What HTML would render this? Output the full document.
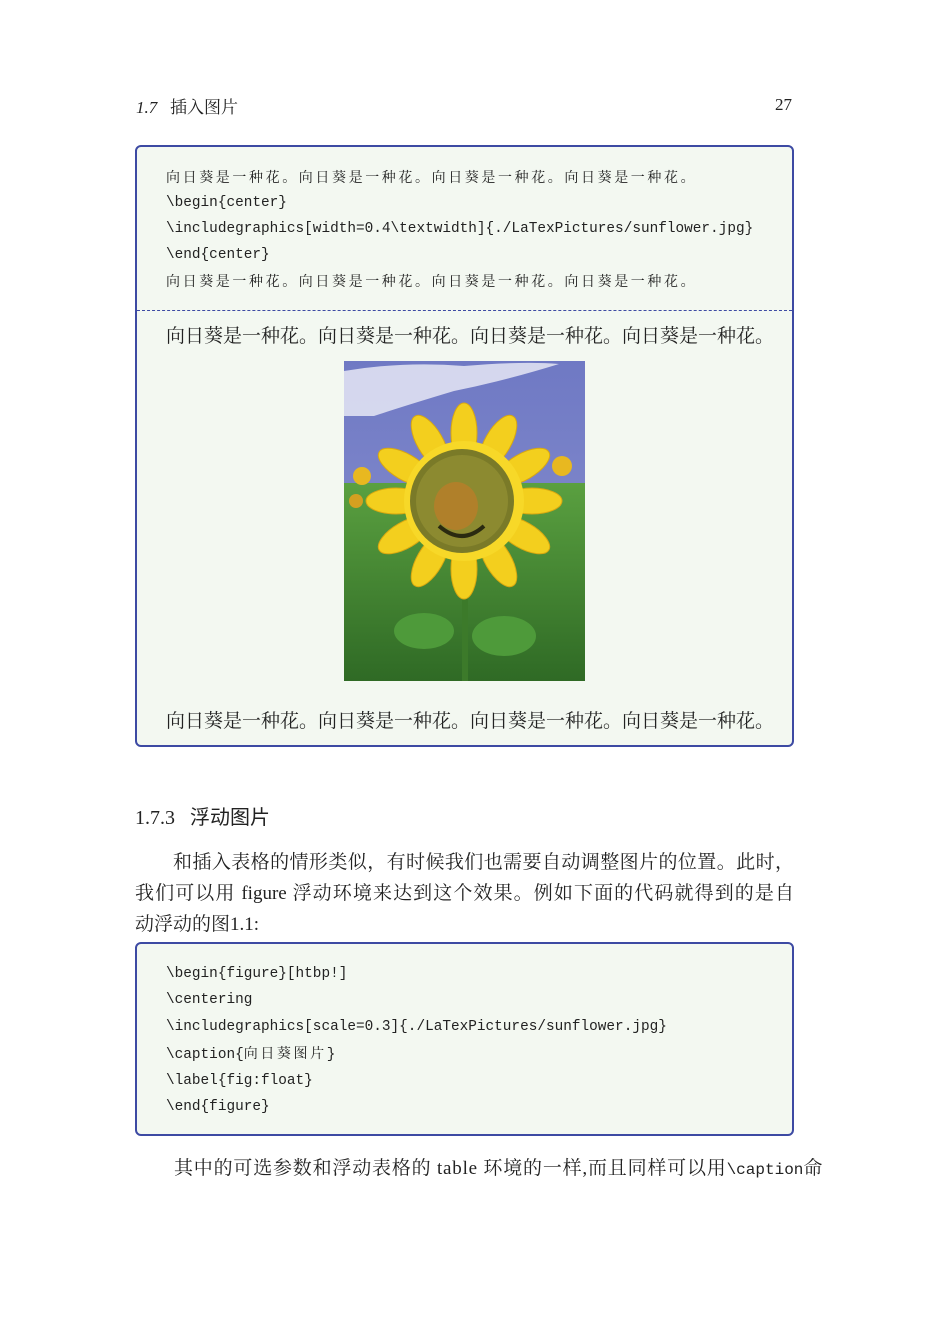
<!DOCTYPE html>
<html><head><meta charset="utf-8"><style>
body{margin:0;background:#fff;width:929px;height:1319px;position:relative;overflow:hidden;font-family:"Liberation Serif","Noto Serif CJK SC",serif;color:#222}
.a{position:absolute;white-space:nowrap}
.box{position:absolute;left:135px;width:655px;border:2px solid #3d4aa3;border-radius:6px;background:#f3f8f1}
.code{font-family:"Liberation Mono","Noto Sans CJK SC",monospace;font-size:14.4px;color:#222}
.cj{font-family:"Noto Serif CJK SC",serif;font-size:14px;letter-spacing:2.6px}
.b{font-size:19px;font-family:"Liberation Serif","Noto Serif CJK SC",serif}
</style></head><body>
<div class="a" style="left:136px;top:93px;font-size:17px;font-style:italic">1.7&nbsp;&nbsp;&nbsp;<span style="font-style:normal;font-family:'Noto Serif CJK SC',serif">插入图片</span></div>
<div class="a" style="left:775px;top:95px;font-size:17px">27</div>

<div class="box" style="top:145px;height:598px"></div>
<div class="a" style="left:137px;top:310px;width:655px;border-top:1.5px dashed #3d4aa3"></div>
<div class="a code" style="left:166px;top:164px;line-height:26px">
<div class="cj">向日葵是一种花。向日葵是一种花。向日葵是一种花。向日葵是一种花。</div>
<div>\begin{center}</div>
<div>\includegraphics[width=0.4\textwidth]{./LaTexPictures/sunflower.jpg}</div>
<div>\end{center}</div>
<div class="cj">向日葵是一种花。向日葵是一种花。向日葵是一种花。向日葵是一种花。</div>
</div>
<div class="a b" style="left:166px;top:321px">向日葵是一种花。向日葵是一种花。向日葵是一种花。向日葵是一种花。</div>
<svg class="a" style="left:344px;top:361px" width="241" height="320" viewBox="0 0 241 320">
<defs><linearGradient id="sky" x1="0" y1="0" x2="0" y2="1"><stop offset="0" stop-color="#6f79c4"/><stop offset="1" stop-color="#8c93d0"/></linearGradient>
<linearGradient id="g" x1="0" y1="0" x2="0" y2="1"><stop offset="0" stop-color="#5aa040"/><stop offset="1" stop-color="#2f6a25"/></linearGradient></defs>
<rect width="241" height="320" fill="url(#sky)"/>
<path d="M0 10 Q60 0 120 5 Q180 0 215 3 Q160 20 110 30 Q60 45 30 55 L0 55Z" fill="#e6e8f4" opacity=".85"/>
<rect y="122" width="241" height="198" fill="url(#g)"/>
<circle cx="18" cy="115" r="9" fill="#e8b820"/><circle cx="218" cy="105" r="10" fill="#e8b820"/><circle cx="12" cy="140" r="7" fill="#d4a020"/>
<rect x="118" y="230" width="6" height="90" fill="#3c7a2a"/>
<ellipse cx="80" cy="270" rx="30" ry="18" fill="#4e9a3a"/><ellipse cx="160" cy="275" rx="32" ry="20" fill="#4e9a3a"/>
<g fill="#f3cf1e" stroke="#d9a810" stroke-width="1" transform="translate(120,140)">
<ellipse cx="0" cy="-68" rx="13" ry="30"/><ellipse cx="0" cy="68" rx="13" ry="30"/><ellipse cx="-68" cy="0" rx="30" ry="13"/><ellipse cx="68" cy="0" rx="30" ry="13"/>
<ellipse cx="0" cy="-68" rx="13" ry="30" transform="rotate(30)"/><ellipse cx="0" cy="-68" rx="13" ry="30" transform="rotate(60)"/><ellipse cx="0" cy="-68" rx="13" ry="30" transform="rotate(120)"/><ellipse cx="0" cy="-68" rx="13" ry="30" transform="rotate(150)"/><ellipse cx="0" cy="-68" rx="13" ry="30" transform="rotate(210)"/><ellipse cx="0" cy="-68" rx="13" ry="30" transform="rotate(240)"/><ellipse cx="0" cy="-68" rx="13" ry="30" transform="rotate(300)"/><ellipse cx="0" cy="-68" rx="13" ry="30" transform="rotate(330)"/>
<circle r="60" fill="#f7d828" stroke="none"/></g>
<circle cx="118" cy="140" r="52" fill="#7a7a28"/>
<circle cx="118" cy="140" r="46" fill="#8c8a30"/>
<ellipse cx="112" cy="145" rx="22" ry="24" fill="#b0802a"/>
<path d="M95 165 Q118 185 140 165" stroke="#2a2a10" stroke-width="4" fill="none"/>
</svg>
<div class="a b" style="left:166px;top:706px">向日葵是一种花。向日葵是一种花。向日葵是一种花。向日葵是一种花。</div>

<div class="a" style="left:135px;top:801px;font-size:20px">1.7.3&nbsp;&nbsp;&nbsp;<span style="font-family:'Noto Sans CJK SC',sans-serif">浮动图片</span></div>
<div class="a b" style="left:135px;top:847px;line-height:31px;width:659px;white-space:normal;text-align:justify">
<div style="text-align-last:justify;padding-left:38px">和插入表格的情形类似，有时候我们也需要自动调整图片的位置。此时，</div>
<div style="text-align-last:justify">我们可以用 figure 浮动环境来达到这个效果。例如下面的代码就得到的是自</div>
<div>动浮动的图1.1:</div>
</div>

<div class="box" style="top:942px;height:190px"></div>
<div class="a code" style="left:166px;top:961px;line-height:26.3px">
<div>\begin{figure}[htbp!]</div>
<div>\centering</div>
<div>\includegraphics[scale=0.3]{./LaTexPictures/sunflower.jpg}</div>
<div>\caption{<span class="cj">向日葵图片</span>}</div>
<div>\label{fig:float}</div>
<div>\end{figure}</div>
</div>
<div class="a b" style="left:174px;top:1153px;letter-spacing:0.8px">其中的可选参数和浮动表格的 table 环境的一样,而且同样可以用<span style="font-family:'Liberation Mono',monospace;font-size:16px;letter-spacing:0">\caption</span>命</div>
</body></html>
